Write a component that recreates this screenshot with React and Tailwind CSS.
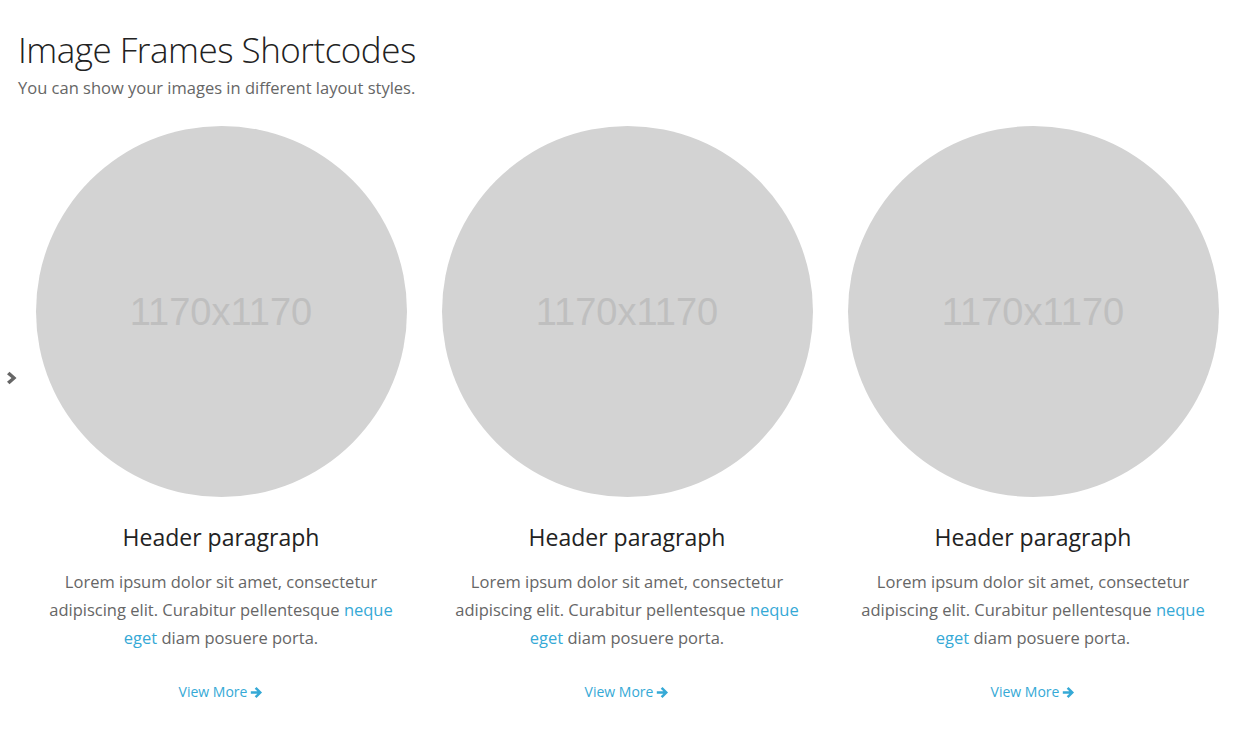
const items = [1, 2, 3];

// font-awesome style arrow-right
const ArrowRight = () => (
  <svg viewBox="0 0 16 16" className="w-[13px] h-[13px] ml-[3px]" fill="currentColor">
    <path d="M8 1.2 L14.8 8 L8 14.8 L5.8 12.6 L9 9.6 H1 V6.4 H9 L5.8 3.4 Z" />
  </svg>
);

const Chevron = () => (
  <svg viewBox="0 0 12 14" className="w-[12px] h-[14px]" fill="currentColor">
    <path d="M3.5 0.8 L10.5 7 L3.5 13.2 L1 10.8 L5.5 7 L1 3.2 Z" />
  </svg>
);

const Card = () => (
  <div className="flex flex-col items-center">
    <div className="w-[371px] h-[371px] rounded-full bg-[#d3d3d3] flex items-center justify-center">
      <span className="text-[38px] text-[#bfbfbf] mt-[2px]" style={{ fontFamily: '"Liberation Sans", Arial, sans-serif' }}>1170x1170</span>
    </div>
    <h3 className="mt-[24px] text-[23px] leading-[32px] text-[#222]">Header paragraph</h3>
    <p className="mt-[15px] text-[16.5px] leading-[28px] text-[#666] text-center px-[20px]">
      Lorem ipsum dolor sit amet, consectetur adipiscing elit. Curabitur pellentesque{' '}
      <span className="text-[#35a9d6]">neque</span> <span className="text-[#35a9d6]">eget</span> diam posuere porta.
    </p>
    <a className="mt-[30px] text-[14px] leading-[20px] text-[#35a9d6] flex items-center">
      View More<ArrowRight />
    </a>
  </div>
);

export default function App() {
  return (
    <div className="w-[1254px] h-[733px] bg-white relative overflow-hidden" style={{ fontFamily: '"Open Sans", sans-serif' }}>
      <div className="pl-[18px] pt-[28px]">
        <h1 className="text-[35px] leading-[44px] font-light text-[#222] tracking-[-0.5px]">Image Frames Shortcodes</h1>
        <p className="text-[16.5px] leading-[22px] text-[#666] mt-[5px]">You can show your images in different layout styles.</p>
      </div>
      <div className="absolute left-[6px] top-[371px] text-[#666]">
        <Chevron />
      </div>
      <div className="ml-[18px] w-[1218px] grid grid-cols-3 mt-[27px]">
        {items.map(i => <Card key={i} />)}
      </div>
    </div>
  );
}
